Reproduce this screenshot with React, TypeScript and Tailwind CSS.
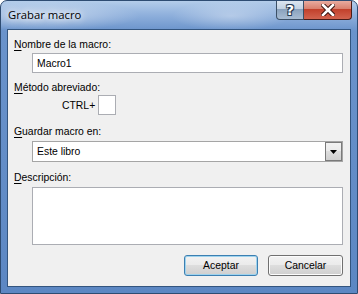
import React from "react";

const U = ({ c }: { c: string }) => <span className="underline underline-offset-2">{c}</span>;

export default function App() {
  return (
    <div className="w-[358px] h-[294px] relative overflow-hidden rounded-t-[7px] border border-[#2e4c72] bg-[linear-gradient(180deg,#b4cdea_0px,#8fb0dc_14px,#6a93cb_30px,#5c87c3_100%)] flex flex-col" style={{ fontFamily: '"Liberation Sans", Tahoma, sans-serif' }}>
      {/* glassy streaks */}
      <div className="absolute left-[170px] top-0 w-[120px] h-[30px] bg-[radial-gradient(ellipse_at_center,rgba(255,255,255,0.35),rgba(255,255,255,0)_70%)] pointer-events-none" />
      <div className="absolute left-0 top-0 w-[140px] h-[30px] bg-[radial-gradient(ellipse_at_30%_50%,rgba(255,255,255,0.45),rgba(255,255,255,0)_70%)] pointer-events-none" />
      {/* Title bar */}
      <div className="relative h-[28px] flex items-start shrink-0">
        <div className="pl-[7px] pt-[6px] text-[11.3px] leading-[16px] text-black [text-shadow:0_0_6px_rgba(255,255,255,1),0_0_10px_rgba(255,255,255,0.9)]" style={{ fontFamily: '"Open Sans", "Noto Sans", sans-serif' }}>
          Grabar macro
        </div>
        <div className="ml-auto mr-[5px] -mt-px flex h-[20px]">
          <div className="w-[28px] h-[20px] rounded-bl-[4px] border border-t-0 border-[#3b4f66] bg-[linear-gradient(180deg,#dfe8f2_0%,#c3d2e3_45%,#8aa2bd_50%,#a9bdd4_100%)] flex items-center justify-center">
            <span className="text-white font-bold text-[14px] leading-none [text-shadow:0_0_1px_#1c2c40,1px_1px_0_#2a3d55,-1px_-1px_0_#2a3d55,1px_-1px_0_#2a3d55,-1px_1px_0_#2a3d55]" style={{ fontFamily: '"DejaVu Sans", sans-serif' }}>?</span>
          </div>
          <div className="w-[48px] h-[20px] rounded-br-[4px] border border-l-0 border-t-0 border-[#4a1c18] bg-[linear-gradient(180deg,#eab1a6_0%,#d9816f_45%,#c2412c_50%,#d2634f_100%)] flex items-center justify-center">
            <svg width="14" height="12" viewBox="0 0 14 12">
              <path d="M2 1 L12 11 M12 1 L2 11" stroke="#3c1410" strokeWidth="4.6" strokeLinecap="square" />
              <path d="M2 1 L12 11 M12 1 L2 11" stroke="#ffffff" strokeWidth="2.6" strokeLinecap="square" />
            </svg>
          </div>
        </div>
      </div>
      {/* Client area */}
      <div className="relative mx-[6px] mb-[6px] flex-1 border border-[#33557f] bg-[#f0f0f0] flex flex-col text-[10.4px] leading-[13px] text-black pl-[6px] pr-[7px]">
        <div className="mt-[8px] h-[13px]"><U c="N" />ombre de la macro:</div>
        <div className="mt-[2px] ml-[18px] h-[20px] border border-[#abadb3] bg-white flex items-center pl-[4px]">Macro1</div>
        <div className="mt-[8px] h-[13px]"><U c="M" />étodo abreviado:</div>
        <div className="mt-[1px] flex items-center">
          <span className="ml-[48px] mr-[3px]">CTRL+</span>
          <div className="w-[18px] h-[20px] border border-[#abadb3] bg-white" />
        </div>
        <div className="mt-[10px] h-[13px]"><U c="G" />uardar macro en:</div>
        <div className="mt-[3px] ml-[18px] h-[21px] border border-[#a5a5a5] bg-white flex items-center">
          <span className="pl-[4px] flex-1">Este libro</span>
          <div className="w-[17px] h-[19px] border border-[#7a7a7a] bg-[linear-gradient(180deg,#f2f2f2_0%,#ebebeb_45%,#dddddd_50%,#cfcfcf_100%)] flex items-center justify-center">
            <svg width="7" height="4" viewBox="0 0 7 4"><path d="M0 0 H7 L3.5 4 Z" fill="#000" /></svg>
          </div>
        </div>
        <div className="mt-[9px] h-[13px]"><U c="D" />escripción:</div>
        <div className="mt-[3px] ml-[18px] h-[58px] border border-[#abadb3] bg-white" />
        <div className="mt-[10px] flex justify-end gap-[10px]">
          <div className="w-[74px] h-[21px] rounded-[3px] border border-[#3c7fb1] shadow-[inset_0_0_0_1px_#9ed3ee] bg-[linear-gradient(180deg,#f2f2f2_0%,#ebebeb_45%,#dddddd_50%,#cfcfcf_100%)] flex items-center justify-center">Aceptar</div>
          <div className="w-[75px] h-[21px] rounded-[3px] border border-[#707070] shadow-[inset_0_0_0_1px_#fcfcfc] bg-[linear-gradient(180deg,#f2f2f2_0%,#ebebeb_45%,#dddddd_50%,#cfcfcf_100%)] flex items-center justify-center">Cancelar</div>
        </div>
      </div>
    </div>
  );
}
